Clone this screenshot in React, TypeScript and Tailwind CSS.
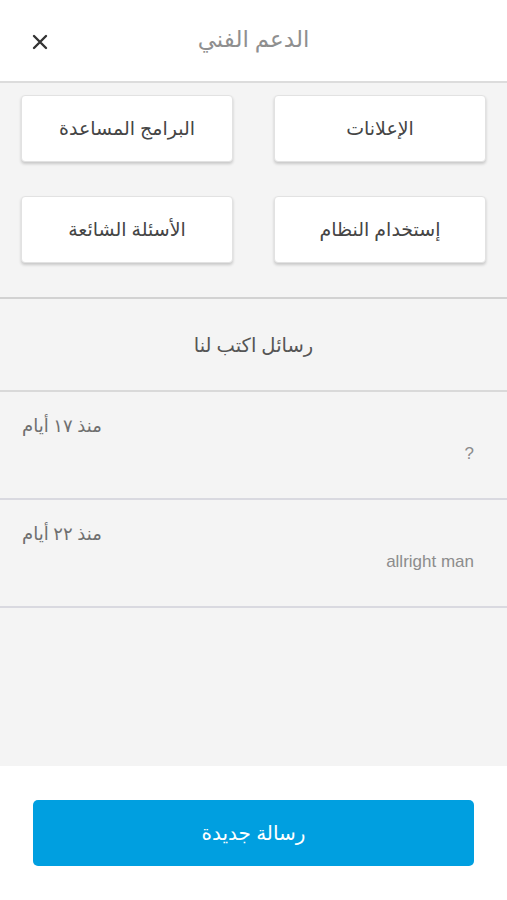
const font = { fontFamily: '"Noto Sans", "DejaVu Sans", sans-serif' };

function Tile({ label }: { label: string }) {
  return (
    <div className="h-[67px] bg-white rounded-[4px] border border-[#e2e2e2] shadow-[0_2px_3px_rgba(0,0,0,0.18)] flex items-center justify-center text-[19px] text-[#454545]">
      {label}
    </div>
  );
}

function Message({ date, text }: { date: string; text: string }) {
  return (
    <div className="h-[108px] border-b-2 border-[#d9d9e0] px-[22px] pt-[18px] flex flex-col">
      <div className="flex justify-start text-[18px] text-[#6f6f6f] leading-[30px]">
        <span dir="rtl">{date}</span>
      </div>
      <div className="flex justify-end pr-[11px] text-[17px] text-[#8c8c8c] mt-[1px]" style={{ fontFamily: '"Liberation Sans", sans-serif' }}>
        {text}
      </div>
    </div>
  );
}

export default function App() {
  return (
    <div className="w-[507px] h-[900px] flex flex-col bg-white" style={font}>
      <div className="h-[83px] shrink-0 relative flex items-center justify-center border-b-2 border-[#dcdcdc]">
        <svg className="absolute left-[32px] top-[34px]" width="16" height="16" viewBox="0 0 16 16">
          <path d="M2 2 L14 14 M14 2 L2 14" stroke="#333" strokeWidth="2.4" strokeLinecap="round" />
        </svg>
        <span className="text-[23px] text-[#8f8f8f] -mt-[4px]" dir="rtl">الدعم الفني</span>
      </div>

      <div className="flex-1 bg-[#f4f4f4] flex flex-col">
        <div className="grid grid-cols-2 gap-x-[41px] gap-y-[34px] px-[21px] pt-[12px] pb-[34px] border-b-2 border-[#d2d2d2]" dir="rtl">
          <Tile label="الإعلانات" />
          <Tile label="البرامج المساعدة" />
          <Tile label="إستخدام النظام" />
          <Tile label="الأسئلة الشائعة" />
        </div>
        <div className="h-[93px] flex items-center justify-center border-b-2 border-[#d9d9d9] text-[19.5px] text-[#555]" dir="rtl">
          رسائل اكتب لنا
        </div>
        <Message date="منذ ١٧ أيام" text="?" />
        <Message date="منذ ٢٢ أيام" text="allright man" />
      </div>

      <div className="h-[134px] shrink-0 bg-white px-[33px] pt-[34px]">
        <button className="w-full h-[66px] rounded-[5px] bg-[#009fe0] text-white text-[20px] flex items-center justify-center" dir="rtl">
          رسالة جديدة
        </button>
      </div>
    </div>
  );
}
